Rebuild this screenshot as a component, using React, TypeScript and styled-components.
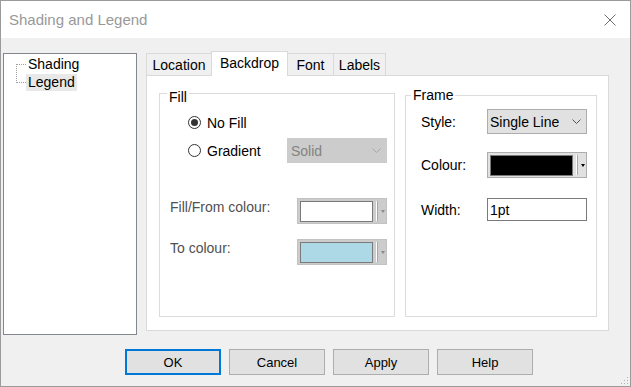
import * as React from 'react';
import styled, { createGlobalStyle } from 'styled-components';

const GlobalStyle = createGlobalStyle`
  html, body {
    margin: 0;
    padding: 0;
    background: #fff;
  }
  body {
    font-family: "Liberation Sans", Arial, sans-serif;
    font-size: 14px;
    color: #000;
  }
  * {
    box-sizing: border-box;
  }
`;

const Window = styled.div`
  position: relative;
  width: 631px;
  height: 387px;
  border: 1px solid #9b9b9b;
  background: #f0f0f0;
  display: flex;
  flex-direction: column;
`;

const TitleBar = styled.div`
  flex: none;
  height: 37px;
  background: #fff;
  display: flex;
  align-items: center;
  justify-content: space-between;
  padding: 0 14px 0 8px;
  font-size: 15px;
  color: #999;
`;

const CloseIcon = styled.svg`
  display: block;
`;

const Main = styled.div`
  display: flex;
  align-items: flex-start;
  gap: 9px;
  height: 297px;
  padding: 13px 0 0 2px;
`;

const Tree = styled.div`
  width: 134px;
  height: 282px;
  margin-top: 2px;
  background: #fff;
  border: 1px solid #828790;
  padding: 1px 0 0 12px;
`;

const TreeList = styled.div`
  position: relative;
  &::before {
    content: '';
    position: absolute;
    left: 0;
    top: 9px;
    height: 19px;
    border-left: 1px dotted #a0a0a0;
  }
`;

const TreeItem = styled.div`
  display: flex;
  align-items: center;
  height: 18px;
`;

const Connector = styled.span`
  width: 10px;
  border-top: 1px dotted #a0a0a0;
`;

const TreeLabel = styled.span<{ $selected?: boolean }>`
  padding: 0 2px;
  line-height: 17px;
  background: ${p => (p.$selected ? '#e8e8e8' : 'transparent')};
`;

const TabArea = styled.div`
  width: 463px;
  display: flex;
  flex-direction: column;
`;

const TabStrip = styled.div`
  position: relative;
  z-index: 1;
  display: flex;
  align-items: flex-end;
  height: 25px;
  margin-bottom: -1px;
`;

const Tab = styled.div<{ $active?: boolean; $width: number }>`
  width: ${p => p.$width}px;
  height: ${p => (p.$active ? 25 : 22)}px;
  margin-bottom: ${p => (p.$active ? 0 : 1)}px;
  margin-left: -1px;
  padding-bottom: ${p => (p.$active ? 3 : 0)}px;
  border: 1px solid #d9d9d9;
  border-bottom: none;
  background: ${p => (p.$active ? '#fff' : '#f0f0f0')};
  position: relative;
  z-index: ${p => (p.$active ? 1 : 0)};
  display: flex;
  align-items: center;
  justify-content: center;
  &:first-child {
    margin-left: 0;
  }
`;

const Panel = styled.div`
  height: 256px;
  background: #fff;
  border: 1px solid #d9d9d9;
  display: flex;
  align-items: flex-end;
  gap: 10px;
  padding: 17px 11px 13px 12px;
`;

const GroupBox = styled.div<{ $width: number; $height: number }>`
  position: relative;
  width: ${p => p.$width}px;
  height: ${p => p.$height}px;
  border: 1px solid #dcdcdc;
  display: flex;
  flex-direction: column;
`;

const FillBox = styled(GroupBox)`
  padding: 16px 7px 0 10px;
`;

const FrameBox = styled(GroupBox)`
  padding: 13px 9px 0 15px;
`;

const Caption = styled.span<{ $top: number; $left: number }>`
  position: absolute;
  top: ${p => p.$top}px;
  left: ${p => p.$left}px;
  padding: 0 2px;
  line-height: 16px;
  background: #fff;
`;

const RadioRow = styled.div<{ $gap?: number }>`
  display: flex;
  align-items: center;
  justify-content: space-between;
  height: 25px;
  margin-left: 18px;
  margin-top: ${p => p.$gap ?? 0}px;
`;

const RadioLabel = styled.label`
  display: flex;
  align-items: center;
  gap: 6px;
`;

const RadioCircle = styled.span<{ $checked?: boolean }>`
  width: 13px;
  height: 13px;
  border-radius: 50%;
  border: 1px solid #333;
  background: #fff;
  display: flex;
  align-items: center;
  justify-content: center;
  &::after {
    content: '';
    width: 7px;
    height: 7px;
    border-radius: 50%;
    background: ${p => (p.$checked ? '#333' : 'transparent')};
  }
`;

const Select = styled.div<{ $disabled?: boolean; $height: number }>`
  width: 100px;
  height: ${p => p.$height}px;
  display: flex;
  align-items: center;
  justify-content: space-between;
  padding: 0 5px 0 ${p => (p.$disabled ? 3 : 2)}px;
  background: ${p => (p.$disabled ? '#cccccc' : '#e1e1e1')};
  border: 1px solid ${p => (p.$disabled ? '#cccccc' : '#adadad')};
  color: ${p => (p.$disabled ? '#838383' : '#000')};
`;

const ColourRow = styled.div<{ $gap: number }>`
  display: flex;
  align-items: flex-start;
  justify-content: space-between;
  margin-top: ${p => p.$gap}px;
`;

const DimLabel = styled.span`
  color: #505050;
  line-height: 16px;
  padding-top: 1px;
`;

const Picker = styled.div<{ $raised?: boolean }>`
  width: ${p => (p.$raised ? 100 : 90)}px;
  height: 26px;
  display: flex;
  align-items: center;
  padding-left: 2px;
  background: ${p => (p.$raised ? '#e1e1e1' : '#cccccc')};
  border: 1px solid ${p => (p.$raised ? '#adadad' : '#c2c2c2')};
`;

const Swatch = styled.span<{ $colour: string; $width: number }>`
  width: ${p => p.$width}px;
  height: 21px;
  background: ${p => p.$colour};
  border: 1px solid #7a7a7a;
`;

const Separator = styled.span`
  width: 2px;
  height: 20px;
  margin: 0 3px;
  border-left: 1px solid #fff;
  border-right: 1px solid #a8a8a8;
`;

const Arrow = styled.span<{ $dark?: boolean }>`
  width: 0;
  height: 0;
  border-left: 2.5px solid transparent;
  border-right: 2.5px solid transparent;
  border-top: 3px solid ${p => (p.$dark ? '#000' : '#8a8a8a')};
`;

const FieldRow = styled.div<{ $gap: number; $height: number }>`
  display: flex;
  align-items: center;
  justify-content: space-between;
  height: ${p => p.$height}px;
  margin-top: ${p => p.$gap}px;
`;

const TextInput = styled.div`
  width: 100px;
  height: 23px;
  border: 1px solid #7a7a7a;
  background: #fff;
  padding-left: 2px;
  display: flex;
  align-items: center;
`;

const ButtonRow = styled.div`
  display: flex;
  gap: 8px;
  margin-top: 14px;
  padding-left: 124px;
`;

const Button = styled.button<{ $primary?: boolean }>`
  width: 96px;
  height: 26px;
  padding: 0;
  font-family: inherit;
  font-size: 13px;
  color: #000;
  background: #e1e1e1;
  border: ${p => (p.$primary ? '2px solid #0078d7' : '1px solid #adadad')};
`;

const Grip = styled.svg`
  position: absolute;
  right: 1px;
  bottom: 1px;
`;

const Chevron: React.FC<{ colour: string }> = ({ colour }) => (
  <svg width="9" height="5" viewBox="0 0 9 5">
    <path d="M0.5 0.5 L4.5 4.5 L8.5 0.5" fill="none" stroke={colour} strokeWidth="1" />
  </svg>
);

const App: React.FC = () => (
  <>
    <GlobalStyle />
    <Window>
      <TitleBar>
        <span>Shading and Legend</span>
        <CloseIcon width="12" height="12" viewBox="0 0 12 12">
          <path d="M0.5 0.5 L11.5 11.5 M11.5 0.5 L0.5 11.5" stroke="#6b6b6b" strokeWidth="1" />
        </CloseIcon>
      </TitleBar>

      <Main>
        <Tree>
          <TreeList>
            <TreeItem>
              <Connector />
              <TreeLabel>Shading</TreeLabel>
            </TreeItem>
            <TreeItem>
              <Connector />
              <TreeLabel $selected>Legend</TreeLabel>
            </TreeItem>
          </TreeList>
        </Tree>

        <TabArea>
          <TabStrip>
            <Tab $width={66}>Location</Tab>
            <Tab $width={77} $active>Backdrop</Tab>
            <Tab $width={47}>Font</Tab>
            <Tab $width={53}>Labels</Tab>
          </TabStrip>
          <Panel>
            <FillBox $width={236} $height={224}>
              <Caption $top={-5} $left={7}>Fill</Caption>
              <RadioRow>
                <RadioLabel>
                  <RadioCircle $checked />
                  No Fill
                </RadioLabel>
              </RadioRow>
              <RadioRow $gap={3}>
                <RadioLabel>
                  <RadioCircle />
                  Gradient
                </RadioLabel>
                <Select $disabled $height={25}>
                  Solid
                  <Chevron colour="#a8a8a8" />
                </Select>
              </RadioRow>
              <ColourRow $gap={35}>
                <DimLabel>Fill/From colour:</DimLabel>
                <Picker>
                  <Swatch $colour="#ffffff" $width={73} />
                  <Separator />
                  <Arrow />
                </Picker>
              </ColourRow>
              <ColourRow $gap={15}>
                <DimLabel>To colour:</DimLabel>
                <Picker>
                  <Swatch $colour="#add8e6" $width={73} />
                  <Separator />
                  <Arrow />
                </Picker>
              </ColourRow>
            </FillBox>

            <FrameBox $width={192} $height={222}>
              <Caption $top={-9} $left={5}>Frame</Caption>
              <FieldRow $gap={0} $height={25}>
                <span>Style:</span>
                <Select $height={25}>
                  Single Line
                  <Chevron colour="#555" />
                </Select>
              </FieldRow>
              <FieldRow $gap={18} $height={26}>
                <span>Colour:</span>
                <Picker $raised>
                  <Swatch $colour="#000000" $width={83} />
                  <Separator />
                  <Arrow $dark />
                </Picker>
              </FieldRow>
              <FieldRow $gap={20} $height={23}>
                <span>Width:</span>
                <TextInput>1pt</TextInput>
              </FieldRow>
            </FrameBox>
          </Panel>
        </TabArea>
      </Main>

      <ButtonRow>
        <Button $primary>OK</Button>
        <Button>Cancel</Button>
        <Button>Apply</Button>
        <Button>Help</Button>
      </ButtonRow>

      <Grip width="9" height="9" viewBox="0 0 9 9">
        <rect x="7" y="1" width="1" height="1" fill="#b0b0b0" />
        <rect x="4" y="4" width="1" height="1" fill="#b0b0b0" />
        <rect x="7" y="4" width="1" height="1" fill="#b0b0b0" />
        <rect x="1" y="7" width="1" height="1" fill="#b0b0b0" />
        <rect x="4" y="7" width="1" height="1" fill="#b0b0b0" />
        <rect x="7" y="7" width="1" height="1" fill="#b0b0b0" />
      </Grip>
    </Window>
  </>
);

export default App;
